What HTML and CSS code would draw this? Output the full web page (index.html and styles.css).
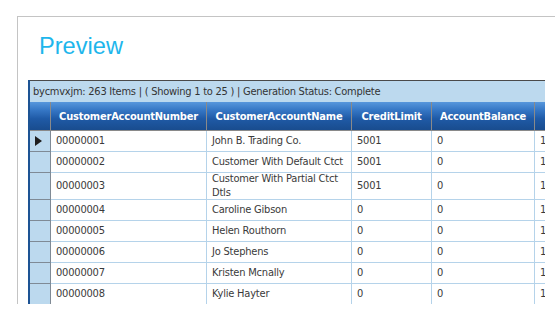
FILE: index.html
```html
<!DOCTYPE html>
<html>
<head>
<meta charset="utf-8">
<link rel="stylesheet" href="styles.css">
</head>
<body>
<div class="frame">
  <h1 class="title">Preview</h1>
  <div class="grid">
    <div class="status">bycmvxjm: 263 Items | ( Showing 1 to 25 ) | Generation Status: Complete</div>
    <div class="row head">
      <div class="cell sel"></div>
      <div class="cell">CustomerAccountNumber</div>
      <div class="cell">CustomerAccountName</div>
      <div class="cell">CreditLimit</div>
      <div class="cell">AccountBalance</div>
      <div class="cell"></div>
    </div>
    <div class="row"><div class="cell sel"><span class="arrow"></span></div><div class="cell">00000001</div><div class="cell">John B. Trading Co.</div><div class="cell">5001</div><div class="cell">0</div><div class="cell">1</div></div>
    <div class="row"><div class="cell sel"></div><div class="cell">00000002</div><div class="cell">Customer With Default Ctct</div><div class="cell">5001</div><div class="cell">0</div><div class="cell">1</div></div>
    <div class="row tall"><div class="cell sel"></div><div class="cell">00000003</div><div class="cell">Customer With Partial Ctct Dtls</div><div class="cell">5001</div><div class="cell">0</div><div class="cell">1</div></div>
    <div class="row"><div class="cell sel"></div><div class="cell">00000004</div><div class="cell">Caroline Gibson</div><div class="cell">0</div><div class="cell">0</div><div class="cell">1</div></div>
    <div class="row"><div class="cell sel"></div><div class="cell">00000005</div><div class="cell">Helen Routhorn</div><div class="cell">0</div><div class="cell">0</div><div class="cell">1</div></div>
    <div class="row"><div class="cell sel"></div><div class="cell">00000006</div><div class="cell">Jo Stephens</div><div class="cell">0</div><div class="cell">0</div><div class="cell">1</div></div>
    <div class="row"><div class="cell sel"></div><div class="cell">00000007</div><div class="cell">Kristen Mcnally</div><div class="cell">0</div><div class="cell">0</div><div class="cell">1</div></div>
    <div class="row"><div class="cell sel"></div><div class="cell">00000008</div><div class="cell">Kylie Hayter</div><div class="cell">0</div><div class="cell">0</div><div class="cell">1</div></div>
  </div>
</div>
</body>
</html>
```
FILE: styles.css
```css
html, body {
  margin: 0;
  padding: 0;
  background: #ffffff;
}
body {
  padding: 16px 0 0 17px;
  height: 314px;
  box-sizing: border-box;
  overflow: hidden;
}
.frame {
  border-top: 1px solid #c4c4c4;
  border-left: 1px solid #c4c4c4;
  height: 287px;
  overflow: hidden;
  padding: 0 0 0 10px;
}
.title {
  margin: 15px 0 0 11px;
  font-family: "Liberation Sans", Arial, sans-serif;
  font-weight: normal;
  font-size: 23.6px;
  line-height: 28px;
  height: 48px;
  color: #1eb6ec;
}
.grid {
  width: 517px;
  overflow: hidden;
  border-left: 2px solid #1d5394;
  box-sizing: border-box;
  font-family: "DejaVu Sans Condensed", "DejaVu Sans", sans-serif;
  font-size: 11px;
}
.status {
  height: 22px;
  box-sizing: border-box;
  line-height: 21px;
  border-top: 1px solid #4a4a4a;
  background: #bcd9ee;
  color: #333333;
  padding-left: 3px;
  white-space: nowrap;
  letter-spacing: -0.25px;
}
.row {
  display: grid;
  grid-template-columns: 21px 156px 145px 80px 103px 111px;
  width: 616px;
  height: 21px;
}
.row.tall {
  height: 27px;
}
.row.head {
  height: 29px;
}
.cell {
  box-sizing: border-box;
  display: flex;
  align-items: center;
  padding: 0 5px;
  color: #3a3a3a;
  border-right: 1px solid #b5d3ea;
  border-bottom: 1px solid #b5d3ea;
  line-height: 14px;
  letter-spacing: -0.2px;
  white-space: normal;
  overflow: hidden;
}
.cell.sel {
  padding: 0;
  background: #bcd9ee;
  border-right-color: #7f8a95;
  border-bottom-color: #7f8a95;
}
.head .cell {
  justify-content: center;
  padding: 2px 4px 0;
  background: linear-gradient(#5797dc 0%, #3576c4 30%, #1f5aa6 60%, #194c8e 100%);
  color: #ffffff;
  font-weight: bold;
  border-right-color: #8a8a8a;
  border-bottom-color: #8a8a8a;
  white-space: nowrap;
}
.arrow {
  display: block;
  width: 0;
  height: 0;
  margin-left: 5px;
  border-top: 5px solid transparent;
  border-bottom: 5px solid transparent;
  border-left: 7px solid #1e1e1e;
}
```
